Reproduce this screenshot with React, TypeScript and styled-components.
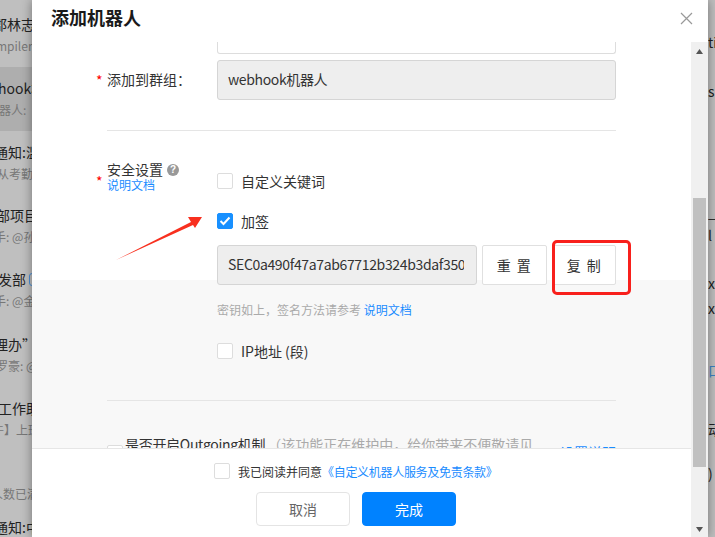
import React from "react";
import styled, { createGlobalStyle } from "styled-components";

const Global = createGlobalStyle`
  html, body { margin: 0; padding: 0; width: 715px; height: 537px; overflow: hidden; }
  body { font-family: "Noto Sans CJK SC", "Noto Sans", sans-serif; font-size: 14px; color: #222; }
  * { box-sizing: border-box; }
`;

const Page = styled.div`
  position: relative; width: 715px; height: 537px; overflow: hidden;
  background: #bfbfbf;
  display: flex; justify-content: space-between;
`;
const SideList = styled.div`
  width: 32px; overflow: hidden; display: flex; flex-direction: column; flex: none;
`;
const SideRow = styled.div<{ $active?: boolean; $h: number; $pad: number }>`
  height: ${p => p.$h}px; flex: none; padding-top: ${p => p.$pad}px;
  background: ${p => (p.$active ? "#aeaeae" : "transparent")};
  white-space: nowrap;
`;
const SideTitle = styled.div<{ $shift: number }>`
  font-size: 14px; line-height: 24px; height: 24px; color: #222; margin-left: ${p => p.$shift}px;
  display: flex; align-items: center; gap: 3px;
`;
const SideTag = styled.span`
  flex: none; width: 16px; height: 13px; border: 1px solid #4a90d9; border-radius: 3px;
`;
const SideSub = styled.div<{ $shift: number }>`
  font-size: 12px; line-height: 18px; height: 18px; margin-top: 1px; color: #777; margin-left: ${p => p.$shift}px;
`;
const RightList = styled.div`
  width: 7px; flex: none; overflow: hidden; display: flex; flex-direction: column; white-space: nowrap;
  font-size: 14px; line-height: 20px; color: #222;
`;
const RightItem = styled.div<{ $top: number; $color?: string }>`
  margin-top: ${p => p.$top}px; height: 20px; color: ${p => p.$color ?? "#222"};
`;

const Dialog = styled.div`
  position: absolute; left: 32px; top: 0; width: 676px; height: 537px; background: #fff;
  box-shadow: 0 0 10px rgba(0,0,0,.4);
  display: grid; grid-template-columns: 659px 17px; grid-template-rows: 42px 1fr;
`;
const Header = styled.div`
  grid-column: 1 / 3; display: flex; align-items: flex-start; justify-content: space-between;
  padding: 4px 15px 0 19px;
`;
const Title = styled.h2`
  margin: 0; font-size: 18px; line-height: 27px; font-weight: 700; color: #1a1a1a;
`;
const Close = styled.svg`
  width: 13px; height: 13px; margin-top: 8px; display: block;
`;
const Main = styled.div`
  display: flex; flex-direction: column; min-height: 0;
`;
const Scroll = styled.div`
  height: 406px; overflow: hidden; flex: none;
  background: linear-gradient(#fff 238px, #f8f8f8 238px);
  padding: 0 75px;
`;
const ClippedInput = styled.div`
  height: 12px; margin-left: 110px; border: 1px solid #ddd; border-top: 0; border-radius: 0 0 3px 3px; background: #fff;
`;
const Row = styled.div<{ $top?: number }>`
  display: flex; margin-top: ${p => p.$top ?? 0}px; position: relative;
`;
const Label = styled.div`
  width: 110px; flex: none; color: #333; position: relative; line-height: 38px;
`;
const Star = styled.span<{ $top?: number }>`
  position: absolute; left: -11px; top: ${p => p.$top ?? 0}px; color: #f00; font-size: 14px; line-height: 40px;
`;
const ReadOnly = styled.div<{ $w?: number }>`
  ${p => (p.$w ? `width: ${p.$w}px; flex: none;` : "flex: 1;")}
  height: 40px; background: #eee; border: 1px solid #d5d5d5;
  border-radius: 3px; padding: 0 11px 0 10px; line-height: 36px; color: #333; overflow: hidden; white-space: nowrap;
  font-size: 14px; letter-spacing: -0.35px;
`;
const Clip = styled.div`
  overflow: hidden; width: 236px;
`;
const Divider = styled.div<{ $top: number }>`
  height: 1px; background: #e5e5e5; margin-top: ${p => p.$top}px;
`;
const SecLabel = styled.div`
  width: 110px; flex: none; position: relative; padding-top: 10px;
`;
const SecTitle = styled.div`
  display: flex; align-items: center; gap: 4px; line-height: 17px; color: #333; height: 17px;
`;
const Help = styled.span`
  width: 12px; height: 12px; border-radius: 50%; background: #999; color: #fff; font-size: 10px; font-weight: 700;
  line-height: 12px; text-align: center; display: inline-block; font-family: "Liberation Sans", sans-serif;
`;
const DocLink = styled.a`
  color: #1a8cff; font-size: 12px; line-height: 14px; display: block;
`;
const Options = styled.div`
  flex: 1; min-width: 0; display: flex; flex-direction: column; padding-top: 22px;
`;
const Check = styled.label<{ $top?: number }>`
  display: flex; align-items: center; gap: 8px; height: 16px; margin-top: ${p => p.$top ?? 0}px; color: #333; font-size: 14px;
`;
const Box = styled.span<{ $on?: boolean }>`
  width: 16px; height: 16px; border-radius: 2px; flex: none; display: flex; align-items: center; justify-content: center;
  border: 1px solid ${p => (p.$on ? "#1890ff" : "#ddd")}; background: ${p => (p.$on ? "#1890ff" : "#fff")};
`;
const KeyRow = styled.div`
  display: flex; margin-top: 16px;
`;
const SmallBtn = styled.button<{ $w: number; $gap: number }>`
  width: ${p => p.$w}px; height: 40px; flex: none; background: #fff; border: 1px solid #e0e0e0; border-radius: 2px;
  font: inherit; font-size: 14px; color: #333; letter-spacing: 1.5px; padding: 0; margin-left: ${p => p.$gap}px;
`;
const Hint = styled.div`
  margin-top: 16px; font-size: 12px; line-height: 18px; color: #aaa;
`;
const Link = styled.a`
  color: #1a8cff;
`;
const AgreeLink = styled(Link)`
  letter-spacing: -0.3px;
`;
const OutRow = styled.div`
  display: flex; align-items: flex-start; margin-top: 33px; height: 30px; white-space: nowrap; position: relative; color: #333;
  letter-spacing: -0.3px;
`;
const OutBox = styled(Box)`
  margin-top: 11px; margin-right: 2px;
`;
const Muted = styled.span`
  color: #aaa; font-size: 14px; margin-left: 2px; letter-spacing: 0;
`;
const OutLink = styled.a`
  position: absolute; right: 0; top: 8px; color: #1a8cff; font-size: 14px; letter-spacing: 0; background: #f8f8f8; padding-left: 4px;
`;
const Footer = styled.div`
  flex: 1; border-top: 1px solid #e6e6e6; background: #fff; display: flex; flex-direction: column; align-items: flex-start;
  padding-top: 14px; position: relative; z-index: 1;
`;
const Agree = styled.div`
  display: flex; align-items: center; gap: 8px; height: 16px; font-size: 12px; color: #333; margin-left: 182px;
`;
const AgreeText = styled.span`
  white-space: nowrap;
`;
const Buttons = styled.div`
  display: flex; gap: 12px; margin-top: 13px; margin-left: 224px;
`;
const Btn = styled.button<{ $primary?: boolean }>`
  width: 94px; height: 34px; border-radius: 4px; font: inherit; font-size: 14px; padding: 0;
  background: ${p => (p.$primary ? "#0082ff" : "#fff")};
  color: ${p => (p.$primary ? "#fff" : "#666")};
  border: 1px solid ${p => (p.$primary ? "#0082ff" : "#e4e4e4")};
`;
const Bar = styled.div`
  background: #f0f0f0; display: flex; flex-direction: column; align-items: center; position: relative;
`;
const Arrow = styled.svg<{ $top: number }>`
  width: 7px; height: 5px; flex: none; display: block; margin-top: ${p => p.$top}px;
`;
const Thumb = styled.div`
  width: 13px; height: 269px; background: #c0c0c0; margin-top: 144px; flex: none;
`;
const RedBox = styled.div`
  position: absolute; left: 552px; top: 240px; width: 79px; height: 55px; border: 3px solid #f8201c; border-radius: 5px;
`;
const RedArrow = styled.svg`
  position: absolute; left: 110px; top: 210px; width: 100px; height: 56px;
`;

const side = [
  { t: "郡林志", s: "mpilerA", st: -7, ss: -4, h: 67, pad: 12 },
  { t: "hook机", s: "器人:", st: -2, ss: -1, h: 64, pad: 9, active: true },
  { t: "通知:滥", s: "从考勤", st: -6, ss: -3, h: 64, pad: 9 },
  { t: "部项目", s: "手: @孙", st: -4, ss: -6, h: 64, pad: 8 },
  { t: "发部", s: "手: @金", st: -2, ss: -6, tag: true, h: 64, pad: 8 },
  { t: "理办”", s: "罗豪: @", st: -6, ss: -4, h: 64, pad: 9 },
  { t: "工作助", s: "牛】上班", st: -2, ss: -8, h: 64, pad: 9 },
  { t: "", s: "人数已满", st: 0, ss: -9, h: 64, pad: 9 },
  { t: "通知:中", s: "", st: -6, ss: 0, h: 64, pad: 0 },
];

export default function App() {
  return (
    <>
      <Global />
      <Page>
        <SideList>
          {side.map((r, i) => (
            <SideRow key={i} $active={r.active} $h={r.h} $pad={r.pad}>
              <SideTitle $shift={r.st}>{r.t}{r.tag && <SideTag />}</SideTitle>
              <SideSub $shift={r.ss}>{r.s}</SideSub>
            </SideRow>
          ))}
        </SideList>
        <RightList>
          <RightItem $top={32}>ti</RightItem>
          <RightItem $top={29}>s</RightItem>
          <RightItem $top={101}>_c</RightItem>
          <RightItem $top={3}>l</RightItem>
          <RightItem $top={28}>x</RightItem>
          <RightItem $top={5}>x</RightItem>
          <RightItem $top={42} $color="#3b82c4">口</RightItem>
          <RightItem $top={39}>动</RightItem>
          <RightItem $top={24}>)</RightItem>
        </RightList>
        <Dialog>
          <Header>
            <Title>添加机器人</Title>
            <Close viewBox="0 0 13 13"><path d="M1 1l11 11M12 1L1 12" stroke="#999" strokeWidth="1.2" fill="none" /></Close>
          </Header>
          <Main>
            <Scroll>
              <ClippedInput />
              <Row $top={6}>
                <Label><Star>*</Star>添加到群组：</Label>
                <ReadOnly>webhook机器人</ReadOnly>
              </Row>
              <Divider $top={30} />
              <Row $top={20}>
                <SecLabel>
                  <Star $top={10}>*</Star>
                  <SecTitle>安全设置<Help>?</Help></SecTitle>
                  <DocLink>说明文档</DocLink>
                </SecLabel>
                <Options>
                  <Check><Box />自定义关键词</Check>
                  <Check $top={24}>
                    <Box $on>
                      <svg width="12" height="10" viewBox="0 0 12 10"><path d="M1.5 5l3 3 6-6.5" stroke="#fff" strokeWidth="2" fill="none" /></svg>
                    </Box>
                    加签
                  </Check>
                  <KeyRow>
                    <ReadOnly $w={260}><Clip>SEC0a490f47a7ab67712b324b3daf350c8</Clip></ReadOnly>
                    <SmallBtn $w={65} $gap={5}>重 置</SmallBtn>
                    <SmallBtn $w={63} $gap={6}>复 制</SmallBtn>
                  </KeyRow>
                  <Hint>密钥如上，签名方法请参考 <Link>说明文档</Link></Hint>
                  <Check $top={24}><Box />IP地址 (段)</Check>
                </Options>
              </Row>
              <Divider $top={41} />
              <OutRow>
                <OutBox />是否开启Outgoing机制<Muted>（该功能正在维护中，给你带来不便敬请见</Muted>
                <OutLink>设置说明</OutLink>
              </OutRow>
            </Scroll>
            <Footer>
              <Agree><Box /><AgreeText>我已阅读并同意<AgreeLink>《自定义机器人服务及免责条款》</AgreeLink></AgreeText></Agree>
              <Buttons>
                <Btn>取消</Btn>
                <Btn $primary>完成</Btn>
              </Buttons>
            </Footer>
          </Main>
          <Bar>
            <Arrow viewBox="0 0 7 5" $top={7}><path d="M3.5 0L7 5H0z" fill="#555" /></Arrow>
            <Thumb />
            <Arrow viewBox="0 0 7 5" $top={60}><path d="M3.5 5L7 0H0z" fill="#555" /></Arrow>
          </Bar>
        </Dialog>
        <RedArrow viewBox="0 0 100 56">
          <path d="M6 50L81 12 78 7 92 7 85 18 83 15z" fill="#f8301f" />
        </RedArrow>
        <RedBox />
      </Page>
    </>
  );
}
